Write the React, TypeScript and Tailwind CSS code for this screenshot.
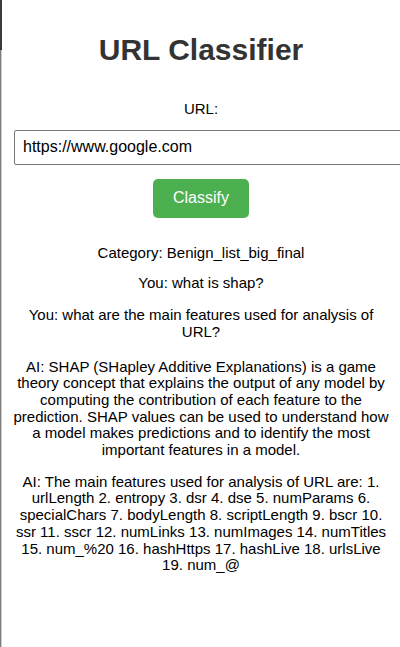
const messages = [
  { text: "Category: Benign_list_big_final", gap: "mt-[27px]" },
  { text: "You: what is shap?", gap: "mt-[14px]" },
  { text: "You: what are the main features used for analysis of URL?", gap: "mt-[15px]" },
  {
    text: "AI: SHAP (SHapley Additive Explanations) is a game theory concept that explains the output of any model by computing the contribution of each feature to the prediction. SHAP values can be used to understand how a model makes predictions and to identify the most important features in a model.",
    gap: "mt-[18px]",
  },
  {
    text: "AI: The main features used for analysis of URL are: 1. urlLength 2. entropy 3. dsr 4. dse 5. numParams 6. specialChars 7. bodyLength 8. scriptLength 9. bscr 10. ssr 11. sscr 12. numLinks 13. numImages 14. numTitles 15. num_%20 16. hashHttps 17. hashLive 18. urlsLive 19. num_@",
    gap: "mt-[15px]",
  },
]

const App = () => {
  return (
    <div className="flex min-h-[647px] w-[400px] overflow-hidden bg-white font-['Liberation_Sans',Arial,sans-serif]">
      {/* window edge on the left */}
      <div className="flex w-[2px] shrink-0 flex-col">
        <div className="h-[50px] bg-[#3a3a3a]" />
        <div className="flex flex-1">
          <div className="w-px bg-[#7c7c7c]" />
          <div className="w-px bg-[#cfcfcf]" />
        </div>
      </div>

      <div className="flex min-w-0 flex-1 flex-col items-center px-[10px] pt-[33px] text-center text-[15px] leading-[16.7px] text-black">
        <h1 className="text-[30px] font-bold leading-[34px] text-[#333333]">URL Classifier</h1>

        <label className="mt-[34px]">URL:</label>

        <input
          type="text"
          defaultValue="https://www.google.com"
          className="ml-[2px] mt-[12px] h-[35px] w-[392px] shrink-0 self-start rounded-[2px] border border-[#767676] bg-white px-[8px] text-[16px] text-black outline-none"
        />

        <button className="mt-[14px] h-[39px] rounded-[5px] bg-[#4CAF50] px-[20px] text-[16px] text-white">
          Classify
        </button>

        <div className="w-full">
          {messages.map((m, i) => (
            <p key={i} className={m.gap}>
              {m.text}
            </p>
          ))}
        </div>
      </div>
    </div>
  )
}

export default App
